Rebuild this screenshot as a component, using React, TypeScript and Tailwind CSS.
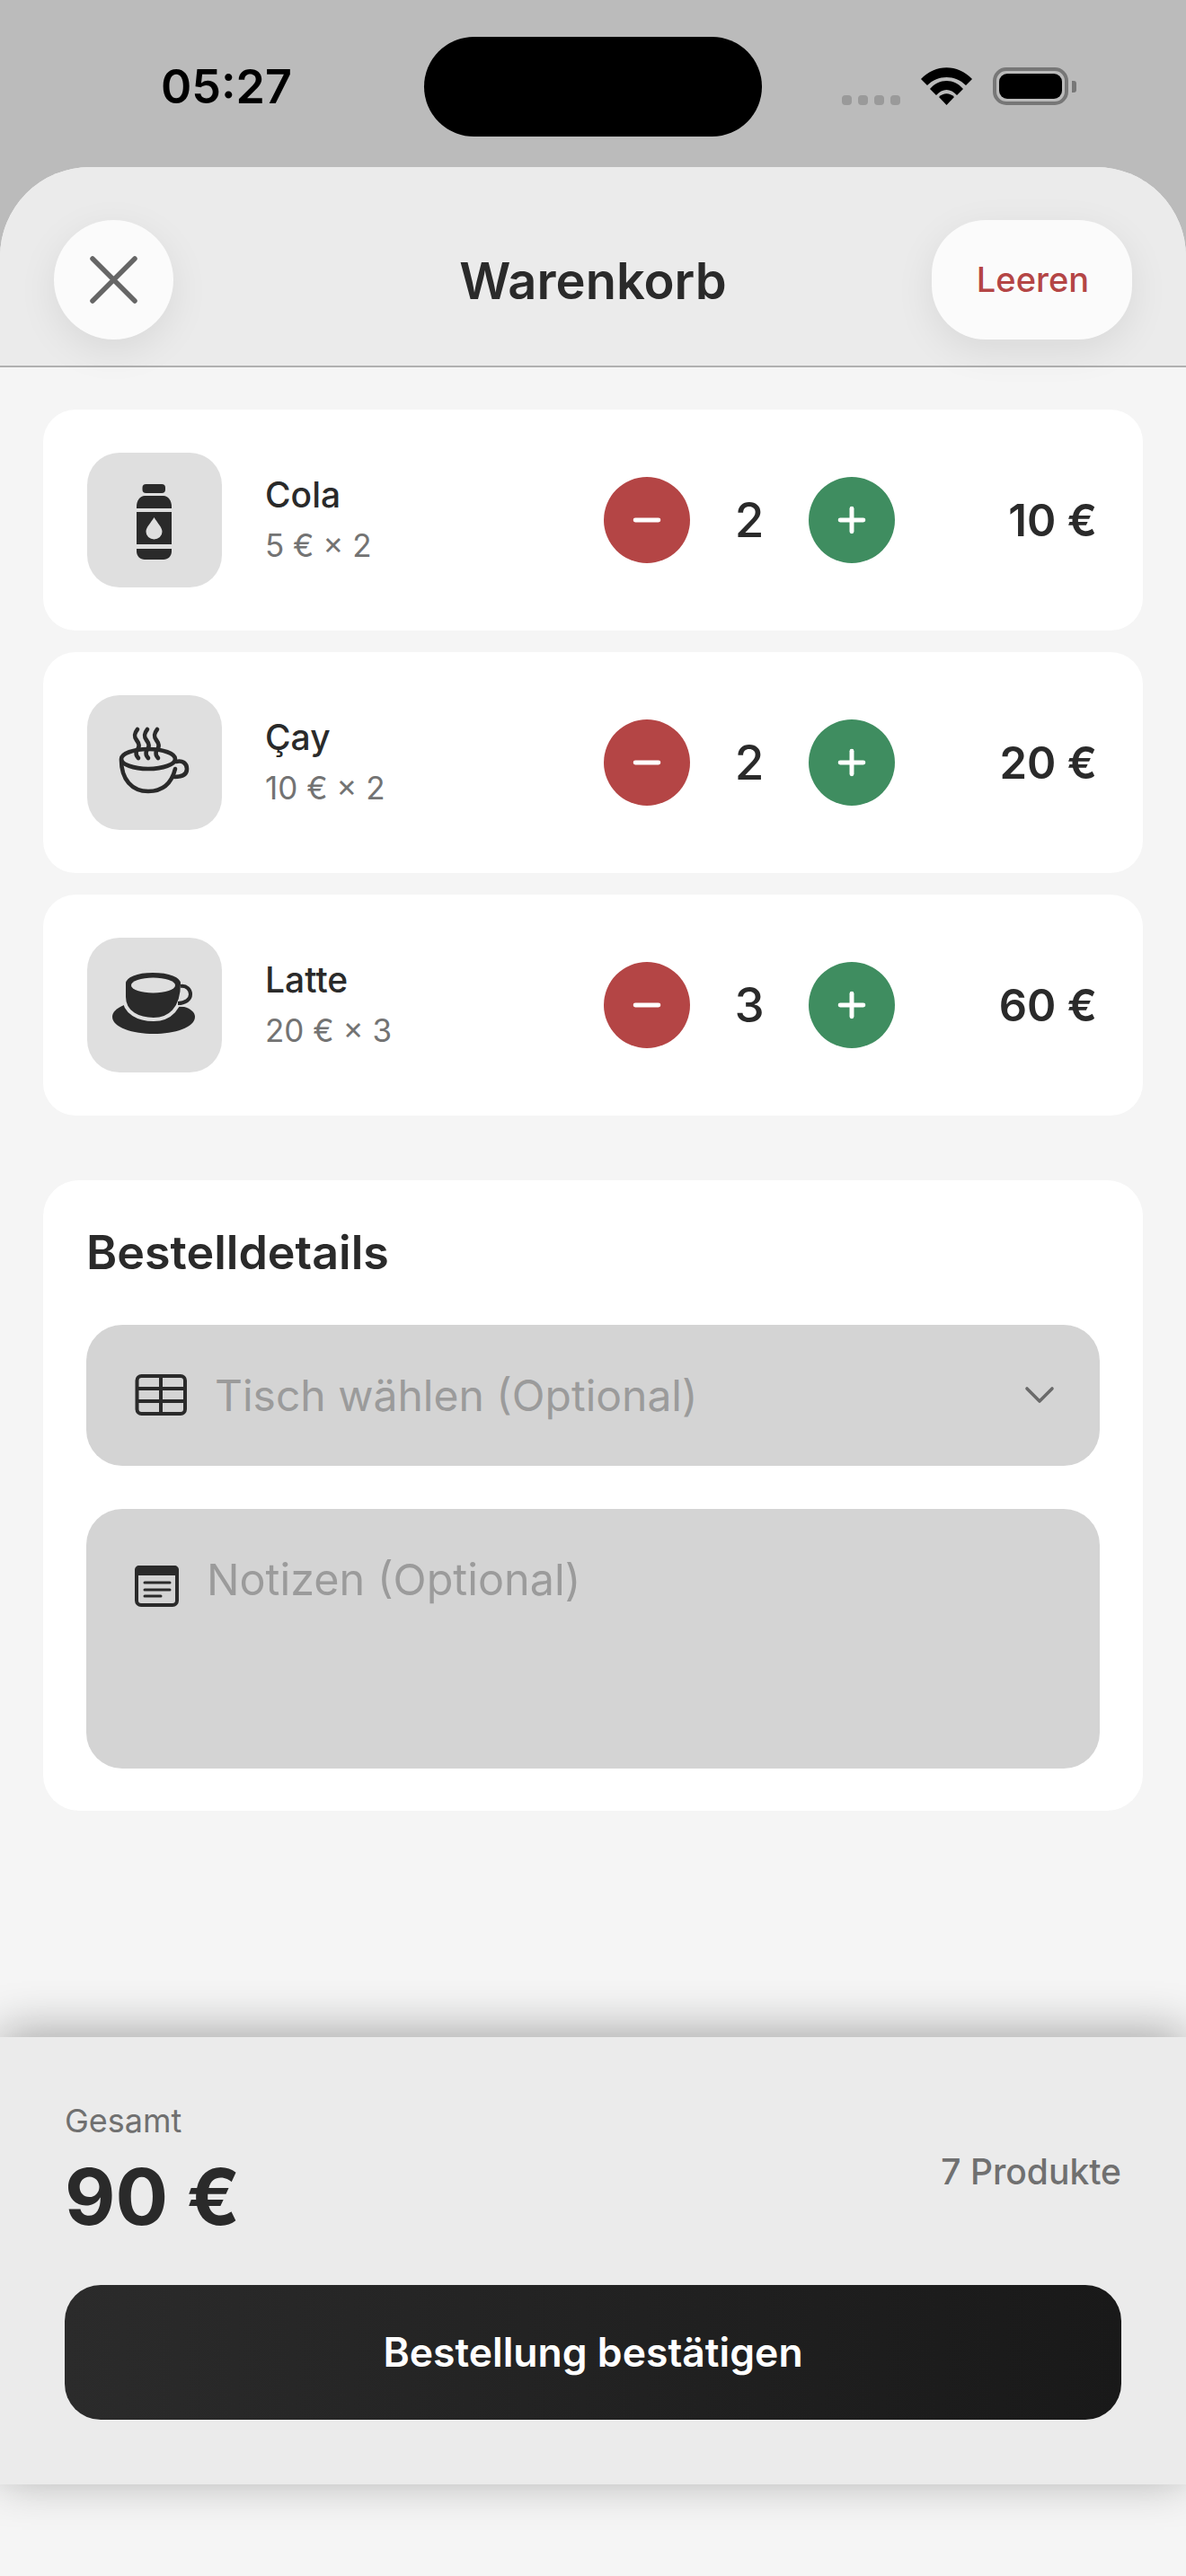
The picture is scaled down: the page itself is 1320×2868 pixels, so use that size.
import { Minus, Plus } from "lucide-react";
import { ReactNode } from "react";

const BottleIcon = () => (
  <svg width="85" height="105" viewBox="0 0 85 105" fill="#2a2a2a">
    <rect x="28.5" y="12" width="25.5" height="10" rx="4" />
    <path d="M22 39V37C22 30 26 25 31 25H52C57 25 61 30 61 37V39Z" />
    <path
      fillRule="evenodd"
      d="M22 43H61V79H22ZM41.5 49C38 55 32.5 60 32.5 65A9 8.5 0 0 0 50.5 65C50.5 60 45 55 41.5 49Z"
    />
    <path d="M22 84H61V87C61 92 57 96 52 96H31C26 96 22 92 22 87Z" />
  </svg>
);

const TeaIcon = () => (
  <svg width="95" height="95" viewBox="0 0 95 95" fill="none" stroke="#2a2a2a" strokeWidth="4.6" strokeLinecap="round">
    <ellipse cx="40" cy="43" rx="30" ry="11" />
    <path d="M10 44C10 66 22 79 40 79C56 79 66 70 70 54" />
    <path d="M71 46C78 44 83 48 83 54C83 61 76 63 69 63" />
    <path d="M28 10C24 15 24 18 27 22C30 26 31 29 27 34C26 37 27 40 29 42" />
    <path d="M39 10C35 15 35 18 38 22C41 26 42 29 38 34C37 37 38 40 40 42" />
    <path d="M50 10C46 15 46 18 49 22C52 26 53 29 49 34C48 37 49 40 51 42" />
  </svg>
);

const LatteIcon = () => (
  <svg width="105" height="95" viewBox="0 0 105 95">
    <path
      fill="#2a2a2a"
      d="M18 47C9 51 5 55 5 60C5 72 28 79 51 79C74 79 97 72 97 60C97 55 92 51 85 49Z"
    />
    <path
      fill="#2a2a2a"
      stroke="#dfdfdf"
      strokeWidth="4"
      d="M18 23V38C18 56 35 63 51 63C68 63 83 52 83 23C83 14 68 9 50 9C33 9 18 14 18 23Z"
    />
    <path d="M81 26C88 25 92 30 92 35C92 41 86 45 78 45" fill="none" stroke="#2a2a2a" strokeWidth="4" />
    <ellipse cx="50.5" cy="25" rx="24.5" ry="8.5" fill="#dfdfdf" />
  </svg>
);

const TableIcon = () => (
  <svg width="80" height="70" viewBox="0 0 80 70" fill="none" stroke="#2a2a2a" strokeWidth="4">
    <rect x="12.5" y="13" width="53.5" height="42" rx="5" />
    <path d="M12.5 27H66M12.5 41H66M39 13V55" />
  </svg>
);

const NoteIcon = () => (
  <svg width="70" height="70" viewBox="0 0 70 70" fill="none" stroke="#2a2a2a">
    <rect x="12" y="15" width="45" height="42" rx="5" strokeWidth="4" />
    <path d="M10 24V18C10 15 12 13 15 13H54C57 13 59 15 59 18V24Z" fill="#2a2a2a" stroke="none" />
    <path d="M21 32H49M21 40H49M21 47H39" strokeWidth="3" strokeLinecap="round" />
  </svg>
);

const items: { name: string; sub: string; qty: number; total: string; icon: ReactNode }[] = [
  { name: "Cola", sub: "5 € × 2", qty: 2, total: "10 €", icon: <BottleIcon /> },
  { name: "Çay", sub: "10 € × 2", qty: 2, total: "20 €", icon: <TeaIcon /> },
  { name: "Latte", sub: "20 € × 3", qty: 3, total: "60 €", icon: <LatteIcon /> },
];

const StatusBar = () => (
  <div className="flex h-[186px] shrink-0 items-start bg-[#bbbbbb] pt-[41px]">
    <div className="flex h-[111px] w-[472px] items-center pl-[179px] text-[52px] font-semibold leading-none text-black">
      05:27
    </div>
    <div className="h-[111px] w-[376px] rounded-[56px] bg-black" />
    <div className="flex h-[76px] items-end pl-[89px]">
      <div className="flex gap-[7px]">
        <div className="size-[11px] rounded-[4px] bg-[#9a9a9a]" />
        <div className="size-[11px] rounded-[4px] bg-[#9a9a9a]" />
        <div className="size-[11px] rounded-[4px] bg-[#9a9a9a]" />
        <div className="size-[11px] rounded-[4px] bg-[#9a9a9a]" />
      </div>
      <svg className="ml-[23px]" width="57" height="42" viewBox="0 0 57 42" fill="#000">
        <path d="M0 13C16 -4 41 -4 57 13L50 20C38 8 19 8 7 20Z" />
        <path d="M10 24C20 12 37 12 47 24L40 31C33 23 24 23 17 31Z" />
        <path d="M20 33C25 28 32 28 37 33L28.5 42Z" />
      </svg>
      <div className="ml-[23px] flex items-center">
        <div className="h-[42px] w-[84px] rounded-[15px] border-[4px] border-[#777777] p-[3px]">
          <div className="h-full w-full rounded-[9px] bg-black" />
        </div>
        <div className="ml-[4px] h-[13px] w-[5px] rounded-r-[3px] bg-[#777777]" />
      </div>
    </div>
  </div>
);

const CartRow = ({ name, sub, qty, total, icon }: (typeof items)[number]) => (
  <div className="flex h-[246px] items-center rounded-[36px] bg-white pl-[49px] pr-[51px]">
    <div className="flex size-[150px] shrink-0 items-center justify-center rounded-[36px] bg-[#dfdfdf]">{icon}</div>
    <div className="ml-[48px] flex-1">
      <div className="-mt-[2px] text-[39px] font-medium leading-[46px] text-[#2a2a2a]">{name}</div>
      <div className="mt-[12px] text-[35px] leading-[42px] text-[#737373]">{sub}</div>
    </div>
    <div className="flex items-center">
      <div className="flex size-[96px] items-center justify-center rounded-full bg-[#b44545] text-white">
        <Minus size={44} strokeWidth={2.7} />
      </div>
      <div className="w-[132px] text-center text-[53px] font-medium leading-none text-[#2a2a2a]">{qty}</div>
      <div className="flex size-[96px] items-center justify-center rounded-full bg-[#3f8d60] text-white">
        <Plus size={44} strokeWidth={2.7} />
      </div>
    </div>
    <div className="w-[225px] text-right text-[49px] font-semibold leading-none text-[#2a2a2a]">{total}</div>
  </div>
);

export default function App() {
  return (
    <div className="flex h-[2868px] w-[1320px] flex-col overflow-hidden bg-[#bbbbbb] font-['Inter',sans-serif]">
      <StatusBar />
      <div className="flex flex-1 flex-col rounded-t-[100px] bg-[#f5f5f5]">
        <div className="relative z-10 flex h-[223px] shrink-0 items-start rounded-t-[100px] border-b-2 border-[#b0b0b0] bg-[#ebebeb] px-[60px] pt-[59px]">
          <div className="w-[223px]">
            <div className="flex size-[133px] items-center justify-center rounded-full bg-[#fbfbfb] shadow-[0_12px_44px_rgba(0,0,0,0.08)]">
              <svg width="53" height="53" viewBox="0 0 53 53" fill="none" stroke="#666666" strokeWidth="5.5" strokeLinecap="round">
                <path d="M3 3L50 50M50 3L3 50" />
              </svg>
            </div>
          </div>
          <div className="flex-1 pt-[36px] text-center text-[56px] font-semibold leading-[64px] text-[#2a2a2a]">Warenkorb</div>
          <div className="flex h-[133px] w-[223px] items-center justify-center rounded-[60px] bg-[#fbfbfb] pl-[2px] text-[38px] font-medium text-[#b44545] shadow-[0_12px_44px_rgba(0,0,0,0.08)]">
            Leeren
          </div>
        </div>
        <div className="flex-1 px-[48px] pt-[47px]">
          <div className="flex flex-col gap-[24px]">
            {items.map((item) => (
              <CartRow key={item.name} {...item} />
            ))}
          </div>
          <div className="mt-[72px] h-[702px] rounded-[40px] bg-white px-[48px] pt-[51px]">
            <div className="text-[52px] font-semibold leading-[60px] text-[#2a2a2a]">Bestelldetails</div>
            <div className="mt-[50px] flex h-[157px] items-center rounded-[40px] bg-[#d4d4d4] pl-[44px] pr-[33px]">
              <TableIcon />
              <div className="ml-[19px] flex-1 text-[48px] leading-none text-[#9b9b9b]">Tisch wählen (Optional)</div>
              <svg width="70" height="70" viewBox="0 0 70 70" fill="none" stroke="#6a6a6a" strokeWidth="3.6" strokeLinecap="round" strokeLinejoin="round">
                <path d="M22 27L36 41L50 27" />
              </svg>
            </div>
            <div className="mt-[48px] flex h-[289px] items-start rounded-[40px] bg-[#d4d4d4] pl-[44px] pt-[50px]">
              <NoteIcon />
              <div className="ml-[20px] text-[48.5px] leading-[58px] text-[#9b9b9b]">Notizen (Optional)</div>
            </div>
          </div>
        </div>
        <div className="mb-[102px] h-[498px] shrink-0 bg-[#ebebeb] px-[72px] pt-[72px] shadow-[0_-6px_50px_rgba(0,0,0,0.33)]">
          <div className="flex items-start justify-between">
            <div>
              <div className="text-[36px] leading-[42px] text-[#707070]">Gesamt</div>
              <div className="mt-[14px] text-[87px] font-bold leading-[100px] text-[#2a2a2a]">90 €</div>
            </div>
            <div className="pt-[55px] text-[39px] font-medium leading-[46px] text-[#707070]">7 Produkte</div>
          </div>
          <div className="mt-[48px] flex h-[150px] items-center justify-center rounded-[40px] bg-gradient-to-r from-[#2b2b2b] to-[#191919] text-[44.5px] font-semibold text-white">
            Bestellung bestätigen
          </div>
        </div>
      </div>
    </div>
  );
}
